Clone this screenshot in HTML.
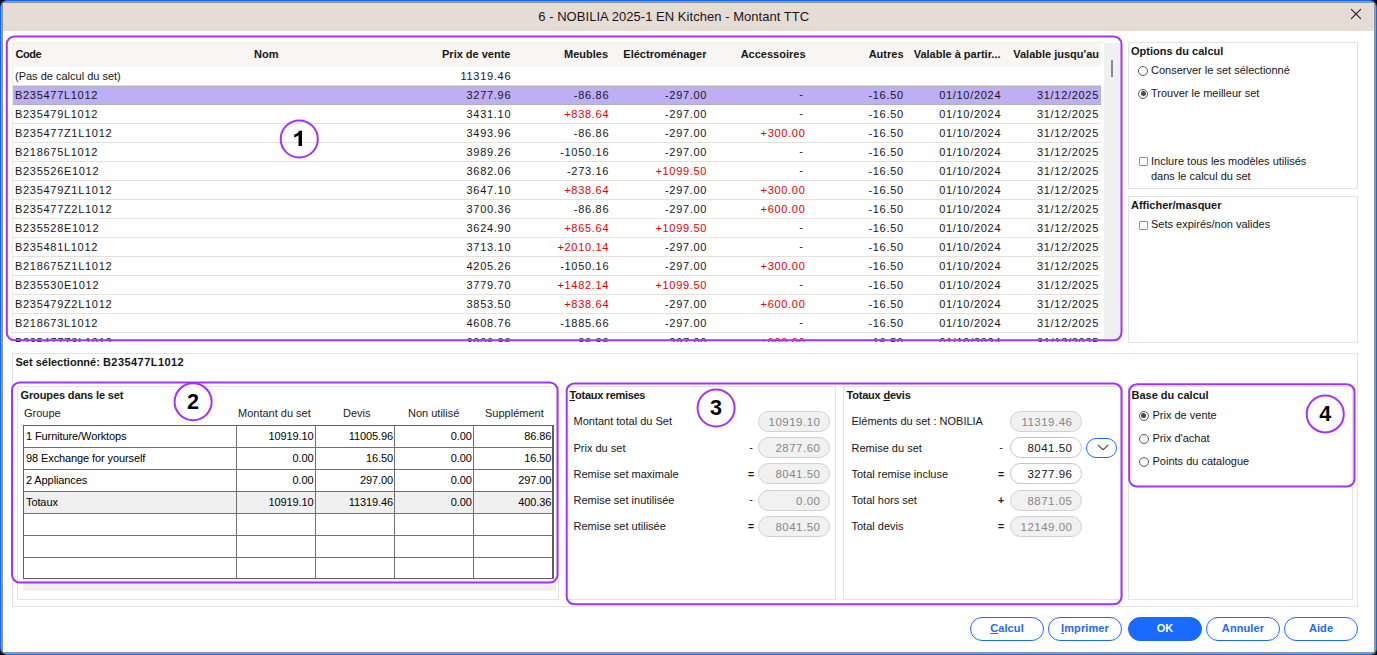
<!DOCTYPE html><html><head><meta charset="utf-8"><title>Set</title><style>*{box-sizing:border-box;margin:0;padding:0}
html,body{width:1377px;height:655px;overflow:hidden;background:#000}
body{position:relative;font-family:"Liberation Sans",sans-serif;font-size:11px;color:#161616}
.win{position:absolute;left:0;top:0;width:1377px;height:655px;background:#0e67ff;border-radius:7px 7px 6px 7px;overflow:hidden}
.gray{position:absolute;left:1px;top:1px;right:1px;bottom:1px;background:#a09b91;border-radius:6px 6px 5px 6px;overflow:hidden}
.gray2{position:absolute;left:1px;top:1px;right:1px;bottom:1px;background:#929290;border-radius:4px 4px 3px 4px;overflow:hidden}
.inner{position:absolute;left:1px;top:1px;right:1px;bottom:1px;background:#fff;border-radius:1px}
.title{position:absolute;left:0;top:0;right:0;height:28px;background:#e6dcd6;text-align:center;line-height:27px;font-size:13px;color:#161616;padding-right:29.5px;letter-spacing:.04px}
.close{position:absolute;left:1347px;top:5px}
.abs{position:absolute}
/* main table */
.tbl{position:absolute;left:0;top:0;width:1377px;height:343px;overflow:hidden}
.thead{position:absolute;left:13px;top:43px;width:1088px;height:24px;background:#f9f5f2}
.th{position:absolute;top:42px;height:25px;line-height:25px;font-weight:bold;font-size:11px;white-space:nowrap;color:#161616}
.r{text-align:right}
.row{position:absolute;left:13px;width:1088px;height:19px;border-bottom:1px solid #e8dfda;background:#fff}
.row.sel{background:#beaef6;border-bottom-color:#b2b2b2;border-top:1px solid #b2b2b2}
.row.sel .c{top:-1px}
.row.sel .dash{top:-2px}
.c{position:absolute;top:0;height:18px;line-height:19px;white-space:nowrap;font-size:11px;margin-left:-13px}
.c.r{margin-left:0;margin-right:-276px}
.code,.num{letter-spacing:.7px}
.red{color:#e60000}
.sbar{position:absolute;left:1104px;top:42.5px;width:17px;height:299.2px;background:#f0f0f0}
.thumb{position:absolute;left:6.8px;top:17.5px;width:2.3px;height:16.7px;background:#8c8c8c}
/* group boxes */
.gb{position:absolute;border:1px solid #e3e3e3;background:transparent}
.gt{position:absolute;height:19px;line-height:19px;font-weight:bold;font-size:11px;white-space:nowrap;color:#161616}
.lbl{position:absolute;height:19px;line-height:19px;font-size:11px;white-space:nowrap;color:#161616}
.bcode{letter-spacing:.45px}
.radio{position:absolute;width:10px;height:10px;border:1px solid #555;border-radius:50%;background:#fff}
.radio.on::after{content:"";position:absolute;left:1.5px;top:1.5px;width:5px;height:5px;border-radius:50%;background:#4a4a4a}
.chk{position:absolute;width:9px;height:9px;border:1px solid #969696;border-radius:1px;background:#fff}
/* MS sans grid */
.ms{position:absolute;height:17px;line-height:17px;font-size:11px;white-space:nowrap;color:#222}
.grid{position:absolute;border:1px solid #606060;border-right:2px solid #606060;background:#fff;overflow:hidden}
.grow{position:absolute;left:0;right:0;height:22px;border-bottom:1px solid #707070}
.grow.tot{background:#f0f0f0}
.gc{position:absolute;top:0;height:21px;line-height:21px;font-size:11px;color:#000;white-space:nowrap;letter-spacing:-.1px}
.vl{position:absolute;top:0;width:1px;height:154px;background:#707070}
.hscroll{position:absolute;background:#f0f0f0}
/* pills */
.pill{position:absolute;width:72px;height:21px;border:1px solid #d0d0d0;border-radius:10.5px;background:#f1f1f1;color:#878787;font-size:11.5px;letter-spacing:.5px;line-height:20px;text-align:right;padding-right:8.5px;white-space:nowrap}
.pill.ed{background:#fff;border-color:#c6c6c6;color:#161616}
.op{position:absolute;width:12px;height:19px;line-height:17.5px;text-align:center;font-size:11px;color:#161616}
.dd{position:absolute;width:31px;height:20px;border:1px solid #1b6aff;border-radius:10px;background:#fff}
.dd svg{position:absolute;left:-1px;top:-1px}
/* purple */
.pb{position:absolute;border:2.3px solid #a431ff;border-radius:8.5px}
.pc{position:absolute;width:39.2px;height:39.2px;color:#000;font-weight:bold;font-size:21.5px;line-height:41.9px;text-align:center}
.pc.t{background:transparent}
/* buttons */
.btn{position:absolute;top:617px;width:74px;height:24px;border:1px solid #1b6aff;border-radius:12px;background:#fff;color:#1b6aff;font-weight:bold;font-size:11px;line-height:20px;text-align:center;letter-spacing:.1px}
.btn.pri{background:#1b6aff;color:#fff}

.dash{top:-1px}
.op.e{line-height:19.5px;font-weight:bold;font-size:10.5px}
</style></head><body>
<div class="win"><div class="gray"><div class="gray2"><div class="inner">
<div class="title">6 - NOBILIA 2025-1 EN Kitchen - Montant TTC</div>
<svg class="close" width="12" height="12" viewBox="0 0 12 12"><path d="M1.1 1.1 L10.9 10.9 M10.9 1.1 L1.1 10.9" stroke="#2a1520" stroke-width="1.1" fill="none"/></svg>
</div></div></div></div>
<div class="tbl">
<div class="abs" style="left:0;top:0;width:1377px;height:342px;overflow:hidden">
<div class="thead"></div>
<div class="th" style="left:15.5px;letter-spacing:-.5px">Code</div>
<div class="abs" style="left:12px;top:42px;width:1px;height:298px;background:#eeeae7"></div>
<div class="abs" style="left:12px;top:42px;width:1092px;height:1px;background:#f0eeec"></div>
<div class="th" style="left:254px">Nom</div>
<div class="th r" style="right:866.5px">Prix de vente</div>
<div class="th r" style="right:769px">Meubles</div>
<div class="th r" style="right:670.5px">Eléctroménager</div>
<div class="th r" style="right:571.5px">Accessoires</div>
<div class="th r" style="right:473.5px">Autres</div>
<div class="th r" style="right:376.5px">Valable à partir...</div>
<div class="th r" style="right:278px">Valable jusqu'au</div>
<div class="row first" style="top:67px">
<span class="c" style="left:15px">(Pas de calcul du set)</span>
<span class="c num r" style="right:865.8px">11319.46</span>
</div>
<div class="row sel" style="top:86px">
<span class="c code" style="left:15px">B235477L1012</span>
<span class="c num r" style="right:865.8px">3277.96</span>
<span class="c num r" style="right:767.8px">-86.86</span>
<span class="c num r" style="right:669.8px">-297.00</span>
<span class="c num r dash" style="right:573.5px">-</span>
<span class="c num r" style="right:473.2px">-16.50</span>
<span class="c num r" style="right:375.8px">01/10/2024</span>
<span class="c num r" style="right:278px">31/12/2025</span>
</div>
<div class="row" style="top:105px">
<span class="c code" style="left:15px">B235479L1012</span>
<span class="c num r" style="right:865.8px">3431.10</span>
<span class="c num r red" style="right:767.8px">+838.64</span>
<span class="c num r" style="right:669.8px">-297.00</span>
<span class="c num r dash" style="right:573.5px">-</span>
<span class="c num r" style="right:473.2px">-16.50</span>
<span class="c num r" style="right:375.8px">01/10/2024</span>
<span class="c num r" style="right:278px">31/12/2025</span>
</div>
<div class="row" style="top:124px">
<span class="c code" style="left:15px">B235477Z1L1012</span>
<span class="c num r" style="right:865.8px">3493.96</span>
<span class="c num r" style="right:767.8px">-86.86</span>
<span class="c num r" style="right:669.8px">-297.00</span>
<span class="c num r red" style="right:571.5px">+300.00</span>
<span class="c num r" style="right:473.2px">-16.50</span>
<span class="c num r" style="right:375.8px">01/10/2024</span>
<span class="c num r" style="right:278px">31/12/2025</span>
</div>
<div class="row" style="top:143px">
<span class="c code" style="left:15px">B218675L1012</span>
<span class="c num r" style="right:865.8px">3989.26</span>
<span class="c num r" style="right:767.8px">-1050.16</span>
<span class="c num r" style="right:669.8px">-297.00</span>
<span class="c num r dash" style="right:573.5px">-</span>
<span class="c num r" style="right:473.2px">-16.50</span>
<span class="c num r" style="right:375.8px">01/10/2024</span>
<span class="c num r" style="right:278px">31/12/2025</span>
</div>
<div class="row" style="top:162px">
<span class="c code" style="left:15px">B235526E1012</span>
<span class="c num r" style="right:865.8px">3682.06</span>
<span class="c num r" style="right:767.8px">-273.16</span>
<span class="c num r red" style="right:669.8px">+1099.50</span>
<span class="c num r dash" style="right:573.5px">-</span>
<span class="c num r" style="right:473.2px">-16.50</span>
<span class="c num r" style="right:375.8px">01/10/2024</span>
<span class="c num r" style="right:278px">31/12/2025</span>
</div>
<div class="row" style="top:181px">
<span class="c code" style="left:15px">B235479Z1L1012</span>
<span class="c num r" style="right:865.8px">3647.10</span>
<span class="c num r red" style="right:767.8px">+838.64</span>
<span class="c num r" style="right:669.8px">-297.00</span>
<span class="c num r red" style="right:571.5px">+300.00</span>
<span class="c num r" style="right:473.2px">-16.50</span>
<span class="c num r" style="right:375.8px">01/10/2024</span>
<span class="c num r" style="right:278px">31/12/2025</span>
</div>
<div class="row" style="top:200px">
<span class="c code" style="left:15px">B235477Z2L1012</span>
<span class="c num r" style="right:865.8px">3700.36</span>
<span class="c num r" style="right:767.8px">-86.86</span>
<span class="c num r" style="right:669.8px">-297.00</span>
<span class="c num r red" style="right:571.5px">+600.00</span>
<span class="c num r" style="right:473.2px">-16.50</span>
<span class="c num r" style="right:375.8px">01/10/2024</span>
<span class="c num r" style="right:278px">31/12/2025</span>
</div>
<div class="row" style="top:219px">
<span class="c code" style="left:15px">B235528E1012</span>
<span class="c num r" style="right:865.8px">3624.90</span>
<span class="c num r red" style="right:767.8px">+865.64</span>
<span class="c num r red" style="right:669.8px">+1099.50</span>
<span class="c num r dash" style="right:573.5px">-</span>
<span class="c num r" style="right:473.2px">-16.50</span>
<span class="c num r" style="right:375.8px">01/10/2024</span>
<span class="c num r" style="right:278px">31/12/2025</span>
</div>
<div class="row" style="top:238px">
<span class="c code" style="left:15px">B235481L1012</span>
<span class="c num r" style="right:865.8px">3713.10</span>
<span class="c num r red" style="right:767.8px">+2010.14</span>
<span class="c num r" style="right:669.8px">-297.00</span>
<span class="c num r dash" style="right:573.5px">-</span>
<span class="c num r" style="right:473.2px">-16.50</span>
<span class="c num r" style="right:375.8px">01/10/2024</span>
<span class="c num r" style="right:278px">31/12/2025</span>
</div>
<div class="row" style="top:257px">
<span class="c code" style="left:15px">B218675Z1L1012</span>
<span class="c num r" style="right:865.8px">4205.26</span>
<span class="c num r" style="right:767.8px">-1050.16</span>
<span class="c num r" style="right:669.8px">-297.00</span>
<span class="c num r red" style="right:571.5px">+300.00</span>
<span class="c num r" style="right:473.2px">-16.50</span>
<span class="c num r" style="right:375.8px">01/10/2024</span>
<span class="c num r" style="right:278px">31/12/2025</span>
</div>
<div class="row" style="top:276px">
<span class="c code" style="left:15px">B235530E1012</span>
<span class="c num r" style="right:865.8px">3779.70</span>
<span class="c num r red" style="right:767.8px">+1482.14</span>
<span class="c num r red" style="right:669.8px">+1099.50</span>
<span class="c num r dash" style="right:573.5px">-</span>
<span class="c num r" style="right:473.2px">-16.50</span>
<span class="c num r" style="right:375.8px">01/10/2024</span>
<span class="c num r" style="right:278px">31/12/2025</span>
</div>
<div class="row" style="top:295px">
<span class="c code" style="left:15px">B235479Z2L1012</span>
<span class="c num r" style="right:865.8px">3853.50</span>
<span class="c num r red" style="right:767.8px">+838.64</span>
<span class="c num r" style="right:669.8px">-297.00</span>
<span class="c num r red" style="right:571.5px">+600.00</span>
<span class="c num r" style="right:473.2px">-16.50</span>
<span class="c num r" style="right:375.8px">01/10/2024</span>
<span class="c num r" style="right:278px">31/12/2025</span>
</div>
<div class="row" style="top:314px">
<span class="c code" style="left:15px">B218673L1012</span>
<span class="c num r" style="right:865.8px">4608.76</span>
<span class="c num r" style="right:767.8px">-1885.66</span>
<span class="c num r" style="right:669.8px">-297.00</span>
<span class="c num r dash" style="right:573.5px">-</span>
<span class="c num r" style="right:473.2px">-16.50</span>
<span class="c num r" style="right:375.8px">01/10/2024</span>
<span class="c num r" style="right:278px">31/12/2025</span>
</div>
<div class="row" style="top:333px">
<span class="c code" style="left:15px">B235477Z3L1012</span>
<span class="c num r" style="right:865.8px">3906.86</span>
<span class="c num r" style="right:767.8px">-86.86</span>
<span class="c num r" style="right:669.8px">-297.00</span>
<span class="c num r red" style="right:571.5px">+900.00</span>
<span class="c num r" style="right:473.2px">-16.50</span>
<span class="c num r" style="right:375.8px">01/10/2024</span>
<span class="c num r" style="right:278px">31/12/2025</span>
</div>
</div>
<div class="sbar"><div class="thumb"></div></div>
</div>
<!-- right panels -->
<div class="gb" style="left:1128px;top:42px;width:230px;height:147px"></div>
<div class="gt" style="left:1131px;top:42px">Options du calcul</div>
<div class="radio" style="left:1138px;top:65.5px"></div><div class="lbl" style="left:1151px;top:61px">Conserver le set sélectionné</div>
<div class="radio on" style="left:1138px;top:88.5px"></div><div class="lbl" style="left:1151px;top:84px">Trouver le meilleur set</div>
<div class="chk" style="left:1138.5px;top:156.5px"></div><div class="lbl" style="left:1151px;top:152px">Inclure tous les modèles utilisés</div>
<div class="lbl" style="left:1151px;top:167px">dans le calcul du set</div>

<div class="gb" style="left:1128px;top:196px;width:230px;height:147px"></div>
<div class="gt" style="left:1131px;top:196px">Afficher/masquer</div>
<div class="chk" style="left:1138.5px;top:220.5px"></div><div class="lbl" style="left:1151px;top:215px">Sets expirés/non valides</div>

<!-- lower outer box -->
<div class="gb" style="left:12px;top:353px;width:1346px;height:254px"></div>
<div class="gt" style="left:15.5px;top:353px">Set sélectionné: <span class="bcode">B235477L1012</span></div>

<!-- groupes box -->
<div class="gb" style="left:17px;top:386px;width:542px;height:214px"></div>
<div class="gt" style="left:20.5px;top:386px;letter-spacing:-.12px">Groupes dans le set</div>
<div class="ms" style="left:24px;top:405px">Groupe</div>
<div class="ms" style="left:238px;top:405px">Montant du set</div>
<div class="ms" style="left:343px;top:405px">Devis</div>
<div class="ms" style="left:408px;top:405px">Non utilisé</div>
<div class="ms" style="left:485px;top:405px">Supplément</div>
<div class="hscroll" style="left:23px;top:579px;width:533px;height:11.6px"></div>
<div class="grid" style="left:23px;top:425px;width:531px;height:154px">
<div class="grow" style="top:0px">
<span class="gc" style="left:2px">1 Furniture/Worktops</span>
<span class="gc" style="right:238.4px">10919.10</span>
<span class="gc" style="right:158.9px">11005.96</span>
<span class="gc" style="right:80.2px">0.00</span>
<span class="gc" style="right:0.7px">86.86</span>
</div>
<div class="grow" style="top:22px">
<span class="gc" style="left:2px">98 Exchange for yourself</span>
<span class="gc" style="right:238.4px">0.00</span>
<span class="gc" style="right:158.9px">16.50</span>
<span class="gc" style="right:80.2px">0.00</span>
<span class="gc" style="right:0.7px">16.50</span>
</div>
<div class="grow" style="top:44px">
<span class="gc" style="left:2px">2 Appliances</span>
<span class="gc" style="right:238.4px">0.00</span>
<span class="gc" style="right:158.9px">297.00</span>
<span class="gc" style="right:80.2px">0.00</span>
<span class="gc" style="right:0.7px">297.00</span>
</div>
<div class="grow tot" style="top:66px">
<span class="gc" style="left:2px">Totaux</span>
<span class="gc" style="right:238.4px">10919.10</span>
<span class="gc" style="right:158.9px">11319.46</span>
<span class="gc" style="right:80.2px">0.00</span>
<span class="gc" style="right:0.7px">400.36</span>
</div>
<div class="grow" style="top:88px">
</div>
<div class="grow" style="top:110px">
</div>
<div class="grow" style="top:132px">
</div>
<div class="vl" style="left:212px"></div>
<div class="vl" style="left:291px"></div>
<div class="vl" style="left:370px"></div>
<div class="vl" style="left:449px"></div>
</div>
<!-- totaux remises -->
<div class="gb" style="left:566px;top:386px;width:270px;height:214px"></div>
<div class="gt" style="left:569.5px;top:386px;letter-spacing:-.3px"><u>T</u>otaux remises</div>
<div class="gb" style="left:843px;top:386px;width:280px;height:214px"></div>
<div class="gt" style="left:846.5px;top:386px;letter-spacing:-.2px">Totaux <u>d</u>evis</div>
<div class="lbl" style="left:573.5px;top:412px">Montant total du Set</div>
<div class="pill" style="left:758px;top:411px">10919.10</div>
<div class="lbl" style="left:573.5px;top:439px">Prix du set</div>
<div class="op" style="left:745px;top:439px">-</div>
<div class="pill" style="left:758px;top:437px">2877.60</div>
<div class="lbl" style="left:573.5px;top:465px">Remise set maximale</div>
<div class="op e" style="left:745px;top:465px">=</div>
<div class="pill" style="left:758px;top:463px">8041.50</div>
<div class="lbl" style="left:573.5px;top:491px">Remise set inutilisée</div>
<div class="op" style="left:745px;top:491px">-</div>
<div class="pill" style="left:758px;top:490px">0.00</div>
<div class="lbl" style="left:573.5px;top:517px">Remise set utilisée</div>
<div class="op e" style="left:745px;top:517px">=</div>
<div class="pill" style="left:758px;top:516px">8041.50</div>
<div class="lbl" style="left:851.5px;top:412px">Eléments du set : NOBILIA</div>
<div class="pill" style="left:1010px;top:411px">11319.46</div>
<div class="lbl" style="left:851.5px;top:439px">Remise du set</div>
<div class="op" style="left:995px;top:439px">-</div>
<div class="pill ed" style="left:1010px;top:437px">8041.50</div>
<div class="lbl" style="left:851.5px;top:465px">Total remise incluse</div>
<div class="op e" style="left:995px;top:465px">=</div>
<div class="pill ed" style="left:1010px;top:463px">3277.96</div>
<div class="lbl" style="left:851.5px;top:491px">Total hors set</div>
<div class="op e" style="left:995px;top:491px">+</div>
<div class="pill" style="left:1010px;top:490px">8871.05</div>
<div class="lbl" style="left:851.5px;top:517px">Total devis</div>
<div class="op e" style="left:995px;top:517px">=</div>
<div class="pill" style="left:1010px;top:516px">12149.00</div>
<div class="dd" style="left:1085.5px;top:438px"><svg width="31" height="20" viewBox="0 0 31 20"><path d="M11.8 6.9 L17.1 11.7 L22.4 6.9" stroke="#444" stroke-width="1.1" fill="none"/></svg></div>

<!-- base du calcul -->
<div class="gb" style="left:1128px;top:386px;width:225px;height:214px"></div>
<div class="gt" style="left:1131.5px;top:386px">Base du calcul</div>
<div class="radio on" style="left:1138.5px;top:410.5px"></div><div class="lbl" style="left:1152.5px;top:406px">Prix de vente</div>
<div class="radio" style="left:1138.5px;top:433.5px"></div><div class="lbl" style="left:1152.5px;top:429px">Prix d'achat</div>
<div class="radio" style="left:1138.5px;top:456.5px"></div><div class="lbl" style="left:1152.5px;top:452px">Points du catalogue</div>

<!-- purple annotation boxes -->
<svg class="abs" style="left:0;top:0" width="1377" height="655" viewBox="0 0 1377 655" fill="none" stroke="#a431ff" stroke-width="2">
<rect x="6.8" y="36.5" width="1114.7" height="303.7" rx="7.6" ry="7.6"/>
<rect x="12" y="382.5" width="545.5" height="199.9" rx="7.6" ry="7.6"/>
<rect x="566.7" y="383.5" width="554.8" height="220.8" rx="7.6" ry="7.6"/>
<rect x="1129.2" y="384.2" width="225.3" height="102.3" rx="7.6" ry="7.6"/>
<g stroke-width="2">
<circle cx="299.25" cy="139" r="18.55"/>
<circle cx="193.1" cy="401.8" r="18.55" fill="#fff"/>
<circle cx="716.1" cy="408" r="18.55" fill="#fff"/>
<circle cx="1325.25" cy="413.95" r="18.55" fill="#fff"/>
</g>
<path d="M302.0 146 H298.5 V135.3 C297.4 136.3 295.9 137.1 294.2 137.6 V134.8 C296.3 134.1 298.3 132.7 299.3 130.8 H302.0 Z" fill="#000" stroke="none"/>
</svg>
<div class="pc" style="left:173.5px;top:382.2px">2</div>
<div class="pc" style="left:696.5px;top:388.4px">3</div>
<div class="pc" style="left:1305.65px;top:394.35px">4</div>

<!-- buttons -->
<div class="btn" style="left:970px"><u>C</u>alcul</div>
<div class="btn" style="left:1048px"><u>I</u>mprimer</div>
<div class="btn pri" style="left:1128px">OK</div>
<div class="btn" style="left:1206px">Annuler</div>
<div class="btn" style="left:1284px">Aide</div>

</body></html>
